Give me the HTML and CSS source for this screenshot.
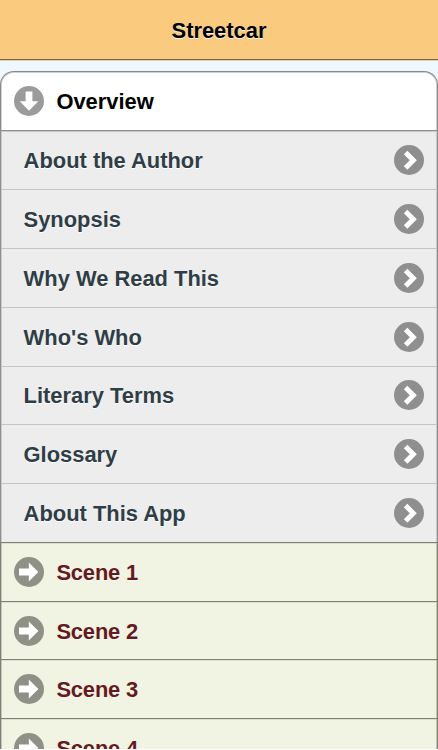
FILE: index.html
```html
<!DOCTYPE html>
<html lang="en">
<head>
    <meta charset="UTF-8">
    <meta name="viewport" content="width=device-width, initial-scale=1.0">
    <title>Streetcar</title>
    <link rel="stylesheet" href="styles.css">
</head>
<body>
    <svg width="0" height="0" class="defs">
        <symbol id="arrow-d" viewBox="0 0 30 30">
            <circle cx="15" cy="15" r="15"/>
            <path d="M11.6 5.5h6.8v9.8h5.9l-9.3 9.4-9.3-9.4h5.9z" fill="#fff"/>
        </symbol>
        <symbol id="arrow-r" viewBox="0 0 30 30">
            <circle cx="15" cy="15" r="15"/>
            <path d="M5 11.6h9.8V5.6l9.6 9.4-9.6 9.4v-6H5z" fill="#fff"/>
        </symbol>
        <symbol id="carat-r" viewBox="0 0 30 30">
            <circle cx="15" cy="15" r="15"/>
            <path d="M11.6 7.6l7.7 7.7-7.7 7.7" fill="none" stroke="#fff" stroke-width="5"/>
        </symbol>
    </svg>
    <div class="page">
        <header class="header">
            <h1>Streetcar</h1>
        </header>
        <div class="collapsible-set">
            <h2 class="heading open"><svg class="icon"><use href="#arrow-d"/></svg><span>Overview</span></h2>
            <ul class="listview">
                <li><a><span>About the Author</span><svg class="icon"><use href="#carat-r"/></svg></a></li>
                <li><a><span>Synopsis</span><svg class="icon"><use href="#carat-r"/></svg></a></li>
                <li><a><span>Why We Read This</span><svg class="icon"><use href="#carat-r"/></svg></a></li>
                <li><a><span>Who's Who</span><svg class="icon"><use href="#carat-r"/></svg></a></li>
                <li><a><span>Literary Terms</span><svg class="icon"><use href="#carat-r"/></svg></a></li>
                <li><a><span>Glossary</span><svg class="icon"><use href="#carat-r"/></svg></a></li>
                <li><a><span>About This App</span><svg class="icon"><use href="#carat-r"/></svg></a></li>
            </ul>
            <h2 class="heading scene"><svg class="icon"><use href="#arrow-r"/></svg><span>Scene 1</span></h2>
            <h2 class="heading scene"><svg class="icon"><use href="#arrow-r"/></svg><span>Scene 2</span></h2>
            <h2 class="heading scene"><svg class="icon"><use href="#arrow-r"/></svg><span>Scene 3</span></h2>
            <h2 class="heading scene"><svg class="icon"><use href="#arrow-r"/></svg><span>Scene 4</span></h2>
        </div>
    </div>
</body>
</html>
```
FILE: styles.css
```css
* {
    box-sizing: border-box;
}

html {
    background-color: #fff;
}

body {
    margin: 0;
    font-family: Helvetica, "Liberation Sans", Arial, sans-serif;
    font-size: 21.9px;
    font-weight: bold;
}

.defs {
    display: none;
}

.page {
    height: 749px;
    overflow: hidden;
    background-color: #f0f8ff;
}

.header {
    height: 60px;
    background-color: #faca7e;
    border-bottom: 1px solid #7d6540;
    box-shadow: 0 1px 0 #d5d0c0;
}

h1 {
    margin: 0;
    font-size: 21.9px;
    line-height: 61px;
    text-align: center;
    text-shadow: 0 1px 0 #f3f3f3;
}

.collapsible-set {
    margin-top: 11px;
}

.heading {
    display: flex;
    align-items: center;
    height: 58.7px;
    margin: 0;
    padding: 0 13px;
    font-size: 21.9px;
    border: 1px solid #7f8076;
    border-width: 1px 1px 0;
    box-shadow: inset 1px 0 0 #c3c5ba, inset -1px 0 0 #c3c5ba, inset 0 1px 0 #dcdfd0;
}

.heading .icon {
    margin-right: 12.4px;
}

.heading span,
.listview span {
    padding-top: 2px;
}

.open {
    height: 59px;
    background-color: #fff;
    border-color: #8a8a8a;
    border-radius: 14px 14px 0 0;
    box-shadow: inset 1px 0 0 #d0d0d0, inset -1px 0 0 #d0d0d0, inset 0 1px 0 #d0d0d0;
    color: #000;
    fill: #9b9b9b;
}

.scene {
    background-color: #f1f4e3;
    color: #651a20;
    fill: #8f9187;
    letter-spacing: -0.15px;
    text-shadow: 0 1px 0 #f8f8f0;
}

.icon {
    flex: none;
    width: 30px;
    height: 30px;
}

.listview {
    margin: 0;
    padding: 0;
    list-style: none;
    background-color: #ededed;
    border: 1px solid #8f8f8f;
    border-bottom: 0;
    box-shadow: inset 1px 0 0 #cacaca, inset -1px 0 0 #cacaca, inset 0 1px 0 #cacaca;
}

.listview li {
    height: 58.85px;
    border-top: 1px solid #c5c5c5;
}

.listview li:first-child {
    height: 58px;
    border-top: 0;
}

.listview a {
    display: flex;
    align-items: center;
    justify-content: space-between;
    height: 100%;
    padding: 0 13px 0 22.6px;
    color: #2f3e46;
    fill: #8f8f8f;
    text-shadow: 0 1px 0 #fff;
}
```
